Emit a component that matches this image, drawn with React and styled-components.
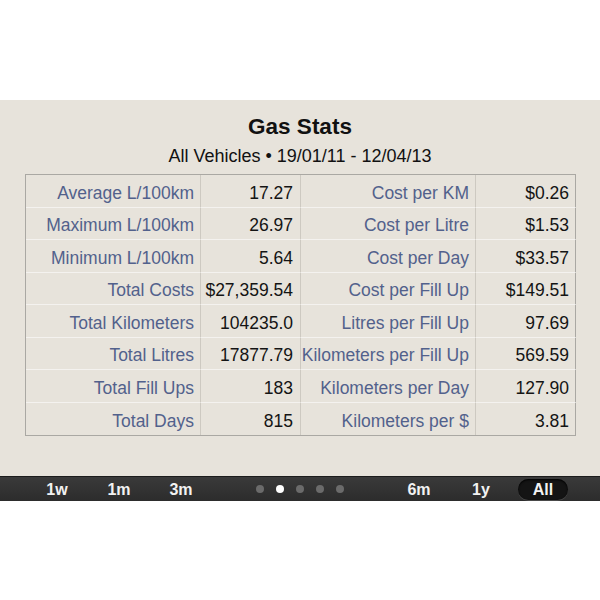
import styled, { createGlobalStyle } from 'styled-components';

const GlobalStyle = createGlobalStyle`
  body {
    margin: 0;
    background: #ffffff;
    font-family: 'Liberation Sans', Arial, sans-serif;
  }
`;

const Screen = styled.div`
  width: 600px;
  height: 600px;
  display: flex;
  flex-direction: column;
  padding-top: 100px;
  box-sizing: border-box;
`;

const Panel = styled.div`
  height: 376px;
  background: #e7e3db;
  display: flex;
  flex-direction: column;
  align-items: center;
  box-sizing: border-box;
  padding-top: 14px;
`;

const Title = styled.h1`
  margin: 0;
  font-size: 22.5px;
  line-height: 26px;
  font-weight: bold;
  color: #111;
`;

const Subtitle = styled.div`
  margin-top: 6px;
  font-size: 18px;
  line-height: 20px;
  color: #111;
`;

const Table = styled.div`
  margin-top: 8px;
  width: 551px;
  margin-left: 1px;
  display: grid;
  grid-template-columns: 175px 100px 175px 100px;
  grid-auto-rows: 32.5px;
  border: 1px solid #aaa8a3;
  box-sizing: border-box;
`;

const Cell = styled.div`
  display: flex;
  align-items: center;
  justify-content: flex-end;
  padding-right: ${(p) => (p.$value ? '7px' : '6px')};
  padding-top: 5px;
  font-size: 17.5px;
  color: ${(p) => (p.$value ? '#141414' : '#52618c')};
  white-space: nowrap;
  border-right: ${(p) => (p.$last ? 'none' : '1px solid #cdc9c1')};
  border-bottom: ${(p) =>
    p.$bottom ? 'none' : '1px solid rgba(255, 255, 255, 0.55)'};
  box-sizing: border-box;
`;

const Bar = styled.div`
  height: 24px;
  background: linear-gradient(#3a3a3a, #2c2c2c);
  border-top: 1px solid #1c1c1c;
  display: flex;
  align-items: center;
  justify-content: space-between;
  padding: 0 26px;
`;

const TabGroup = styled.div`
  display: flex;
`;

const Tab = styled.div`
  width: 62px;
  display: flex;
  justify-content: center;
`;

const TabLabel = styled.span`
  font-size: 16px;
  font-weight: bold;
  color: #f2f2f2;
  line-height: 21px;
  padding: 0 ${(p) => (p.$active ? '15px' : '0')};
  border-radius: 11px;
  background: ${(p) => (p.$active ? '#141414' : 'transparent')};
  box-shadow: ${(p) => (p.$active ? 'inset 0 1px 2px #000, 0 1px 0 #4a4a4a' : 'none')};
`;

const Dots = styled.div`
  display: flex;
  gap: 12px;
`;

const Dot = styled.span`
  width: 8px;
  height: 8px;
  border-radius: 50%;
  background: ${(p) => (p.$active ? '#ffffff' : '#6b6b6b')};
`;

const rows = [
  ['Average L/100km', '17.27', 'Cost per KM', '$0.26'],
  ['Maximum L/100km', '26.97', 'Cost per Litre', '$1.53'],
  ['Minimum L/100km', '5.64', 'Cost per Day', '$33.57'],
  ['Total Costs', '$27,359.54', 'Cost per Fill Up', '$149.51'],
  ['Total Kilometers', '104235.0', 'Litres per Fill Up', '97.69'],
  ['Total Litres', '17877.79', 'Kilometers per Fill Up', '569.59'],
  ['Total Fill Ups', '183', 'Kilometers per Day', '127.90'],
  ['Total Days', '815', 'Kilometers per $', '3.81'],
];

const App = () => {
  return (
    <Screen>
      <GlobalStyle />
      <Panel>
        <Title>Gas Stats</Title>
        <Subtitle>All Vehicles • 19/01/11 - 12/04/13</Subtitle>
        <Table>
          {rows.map((row, r) =>
            row.map((text, c) => (
              <Cell
                key={`${r}-${c}`}
                $value={c % 2 === 1}
                $last={c === 3}
                $bottom={r === rows.length - 1}
              >
                {text}
              </Cell>
            ))
          )}
        </Table>
      </Panel>
      <Bar>
        <TabGroup>
          <Tab><TabLabel>1w</TabLabel></Tab>
          <Tab><TabLabel>1m</TabLabel></Tab>
          <Tab><TabLabel>3m</TabLabel></Tab>
        </TabGroup>
        <Dots>
          <Dot />
          <Dot $active />
          <Dot />
          <Dot />
          <Dot />
        </Dots>
        <TabGroup>
          <Tab><TabLabel>6m</TabLabel></Tab>
          <Tab><TabLabel>1y</TabLabel></Tab>
          <Tab><TabLabel $active>All</TabLabel></Tab>
        </TabGroup>
      </Bar>
    </Screen>
  );
};

export default App;
